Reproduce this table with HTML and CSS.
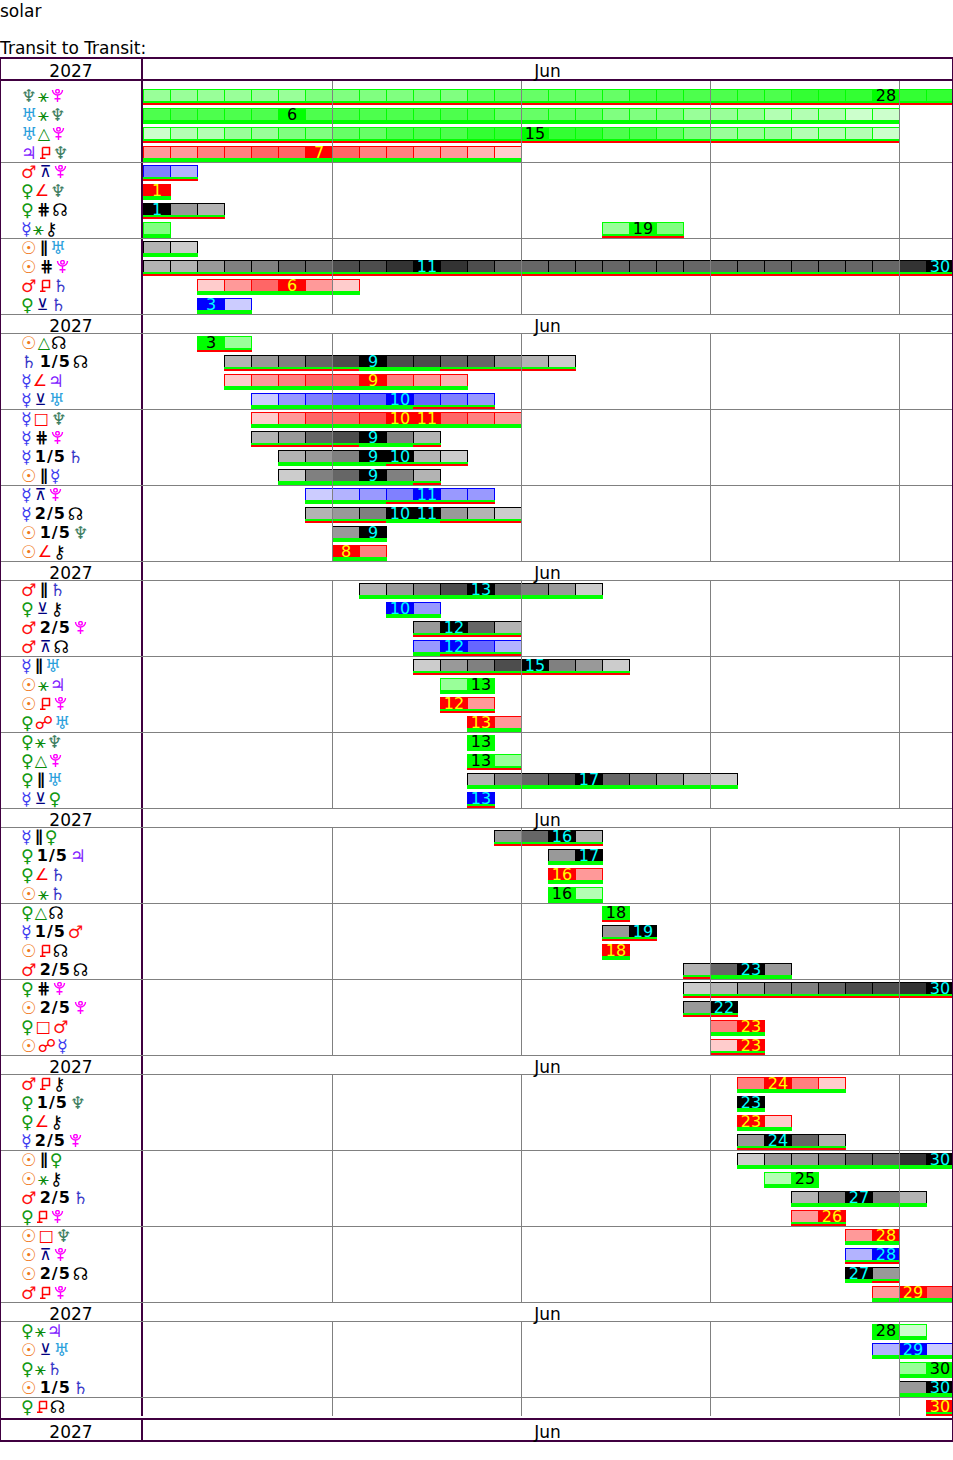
FILE: index.html
```html
<!DOCTYPE html>
<html>
<head>
<meta charset="utf-8">
<title>solar</title>
<link rel="stylesheet" href="styles.css">
</head>
<body>
<div class="site">solar</div>
<div class="heading">Transit to Transit:</div>
<div class="table">
  <div class="hdr"><div class="yr">2027</div><div class="mo">Jun</div></div>
  <div id="rows"></div>
  <div class="hdr"><div class="yr">2027</div><div class="mo">Jun</div></div>
</div>
<script src="script.js"></script>
</body>
</html>
```

FILE: styles.css
```css
html, body { margin: 0; padding: 0; background: #fff; }
body { font-family: "DejaVu Sans", Verdana, sans-serif; font-size: 17px; color: #000; width: 953px; }
.site { padding-top: 2px; line-height: 19px; height: 19px; }
.heading { margin-top: 18px; line-height: 18px; height: 18px; white-space: nowrap; }

.table { width: 953px; box-sizing: border-box; border-left: 1px solid #400040; border-right: 1px solid #400040; }

.hdr { display: grid; grid-template-columns: 142px 809px; height: 24px; box-sizing: border-box; border-top: 2px solid #400040; border-bottom: 2px solid #400040; }
.hdr > div { display: flex; align-items: flex-end; justify-content: center; line-height: 15px; }
.hdr .yr { border-right: 2px solid #400040; }

.sub { display: grid; grid-template-columns: 142px 809px; height: 19px; box-sizing: border-box; border-top: 1px solid #808080; }
.sub > div { display: flex; align-items: flex-end; justify-content: center; line-height: 14px; }
.sub .yr { border-right: 2px solid #400040; }

.grp { border-top: 1px solid #808080; }
.grp.first { border-top: 0; }
.row { display: grid; grid-template-columns: 142px 809px; height: 19px; box-sizing: border-box; }
.grp .row:first-child { height: 18px; }
.grp.first .row:first-child { height: 24px; }
.grp.last .row:last-child { height: 20px; padding-bottom: 2px; }

.sym { border-right: 2px solid #400040; padding-left: 20px; display: flex; align-items: flex-end; font-size: 16px; line-height: 18px; white-space: nowrap; }
.gl { margin-right: 1px; }
.gl.pl-big { font-size: 17.5px; }
.gl.as-big { font-size: 18px; }
.ico { display: inline-block; vertical-align: -1px; }
.p-su { color: #f07820; }
.p-me { color: #3c3cf0; }
.p-ve { color: #119911; }
.p-ma { color: #ff1010; }
.p-ju { color: #8020ff; }
.p-sa { color: #3838c8; }
.p-ur { color: #2aa0dc; }
.p-ne { color: #3d7d60; }
.p-pl { color: #ff00ff; margin-left: 1px; margin-right: 2px; }
.p-no, .p-ch { color: #000; }
.a-grn { color: #0a8a0a; }
.a-red { color: #ff0000; }
.a-nav { color: #000080; margin-left: 2px; margin-right: 2px; }
.a-blk { color: #000; font-weight: bold; margin-left: 2px; margin-right: 2px; }
.a-txt { color: #000; font-weight: bold; letter-spacing: 1px; margin-left: 2px; margin-right: 2px; }
.a-sq { margin-left: 1px; margin-right: 2px; }

.trk { position: relative; display: grid; grid-template-columns: repeat(30, 27px); align-items: end; overflow: hidden; }
.trk::after {
  content: ""; position: absolute; left: 0; top: 0; right: 0; bottom: 0; pointer-events: none;
  background-image: linear-gradient(#808080, #808080), linear-gradient(#808080, #808080), linear-gradient(#808080, #808080), linear-gradient(#808080, #808080);
  background-size: 1px 100%; background-repeat: no-repeat;
  background-position: 189px 0, 378px 0, 567px 0, 756px 0;
}
.bar { grid-row: 1; display: flex; justify-self: start; }
.cl { width: 27px; flex: none; }
.cl:last-child { width: 28px; }
.f { height: 12px; box-sizing: border-box; border-top: 1px solid; border-left: 1px solid; font-size: 16px; line-height: 11px; text-align: center; white-space: nowrap; }
.cl:last-child .f { border-right: 1px solid; }
.bar.G .f { border-color: #00ff00; color: #000; }
.bar.R .f { border-color: #ff0000; color: #ffff00; }
.bar.B .f { border-color: #0000ff; color: #00ffff; }
.bar.K .f { border-color: #000000; color: #00ffff; }
.s { height: 4px; }
.s.g { background: #00ff00; }
.s.r { background: linear-gradient(#00ff00 0 2px, #ff0000 2px 4px); }
```

FILE: script.js
```js
(function () {
  var PLUTO = '<svg class="ico" width="13" height="13" viewBox="0 0 13 13"><g fill="none" stroke="currentColor" stroke-width="1.4"><path d="M1.5 1a5 5 0 0 0 10 0"/><circle cx="6.5" cy="2.3" r="1.8"/><path d="M6.5 6V13M3.5 9.8H9.5"/></g></svg>';
  var SESQ = '<svg class="ico" width="12" height="13" viewBox="0 0 12 13"><g fill="none" stroke="currentColor" stroke-width="1.5"><path d="M3.5 1.5H10.5V8.5H3.5M3.5 1.5V12.3M1 12.3H6.5"/></g></svg>';
  var PL = { su: ['\u2609', 'su', 1], me: ['\u263F', 'me', 1], ve: ['\u2640', 've', 1], ma: ['\u2642', 'ma', 1], ju: ['\u2643', 'ju', 1], sa: ['\u2644', 'sa', 1], ur: ['\u2645', 'ur', 1], ne: ['\u2646', 'ne', 1], pl: [PLUTO, 'pl', 2], no: ['\u260A', 'no', 1], ch: ['\u26B7', 'ch', 1] };
  var AS = { sx: ['\u26B9', 'grn', 1], tr: ['\u25B3', 'grn', 0], sq: ['\u25A1', 'red sq', 0], sesq: [SESQ, 'red sq', 2], semi: ['\u2220', 'red', 0], op: ['\u260D', 'red', 1], qx: ['\u22BC', 'nav', 0], ssx: ['\u22BB', 'nav', 0], par: ['\u2225', 'blk', 0], cpar: ['\u22D5', 'blk', 0], q1: ['1/5', 'txt', 0], q2: ['2/5', 'txt', 0] };
  var BASE = { G: [0, 255, 0], R: [255, 0, 0], B: [0, 0, 255], K: [0, 0, 0] };
  function shade(t, d) {
    var b = BASE[t], k = d / 10;
    return 'rgb(' + b.map(function (v) { return Math.round(v + (255 - v) * k); }).join(',') + ')';
  }
  function el(tag, cls, txt) {
    var e = document.createElement(tag);
    if (cls) e.className = cls;
    if (txt != null) e.textContent = txt;
    return e;
  }
  function glyph(def, prefix, bigCls) {
    var cls = 'gl ' + def[1].split(' ').map(function (c) { return prefix + c; }).join(' ');
    if (def[2] === 2) {
      var s = el('span', cls);
      s.innerHTML = def[0];
      return s;
    }
    if (def[2] === 1) cls += ' ' + bigCls;
    return el('span', cls, def[0]);
  }
  function rep(c, n) { return new Array(n + 1).join(c); }

  var D = [
    [
      ['ne', 'sx', 'pl', [['G', 1, '666666' + '555555' + '444444' + '333333' + '222' + '0' + '22', 'r']]],
      ['ur', 'sx', 'ne', [['G', 1, '33333' + '0' + '333333344445556' + '6677788', 'g']]],
      ['ur', 'tr', 'pl', [['G', 1, '87766554433322' + '0' + '223345' + '6667778', 'r']]],
      ['ju', 'sesq', 'ne', [['R', 1, '665544' + '0' + '4556678', 'g']]]
    ],
    [
      ['ma', 'qx', 'pl', [['B', 1, '57', 'r']]],
      ['ve', 'semi', 'ne', [['R', 1, '0', 'g']]],
      ['ve', 'cpar', 'no', [['K', 1, '067', 'r']]],
      ['me', 'sx', 'ch', [['G', 1, '5', 'g'], ['G', 18, '605', 'r']]]
    ],
    [
      ['su', 'par', 'ur', [['K', 1, '78', 'g']]],
      ['su', 'cpar', 'pl', [['K', 1, '7765544332' + '0' + '23' + rep('4', 15) + '20', 'r']]],
      ['ma', 'sesq', 'sa', [['R', 3, '864068', 'g']]],
      ['ve', 'ssx', 'sa', [['B', 3, '08', 'g']]]
    ],
    'H',
    [
      ['su', 'tr', 'no', [['G', 3, '06', 'r']]],
      ['sa', 'q1', 'no', [['K', 4, '7654303344678', 'rrrrrgggrrrrr']]],
      ['me', 'semi', 'ju', [['R', 4, '865440567', 'g']]],
      ['me', 'ssx', 'ur', [['B', 5, '865440456', 'ggggggrrr']]]
    ],
    [
      ['me', 'sq', 'ne', [['R', 5, '8644300456', 'g']]],
      ['me', 'cpar', 'pl', [['K', 5, '7643057', 'rrrrggr']]],
      ['me', 'q1', 'sa', [['K', 6, '7650078', 'ggggrrr']]],
      ['su', 'par', 'me', [['K', 6, '854057', 'gggggr']]]
    ],
    [
      ['me', 'qx', 'pl', [['B', 7, '8765066', 'gggrrrr']]],
      ['me', 'q2', 'no', [['K', 7, '76500678', 'rrrggrrr']]],
      ['su', 'q1', 'ne', [['K', 8, '60', 'g']]],
      ['su', 'semi', 'ch', [['R', 8, '05', 'g']]]
    ],
    'H',
    [
      ['ma', 'par', 'sa', [['K', 9, '765304568', 'g']]],
      ['ve', 'ssx', 'ch', [['B', 10, '06', 'g']]],
      ['ma', 'q2', 'pl', [['K', 11, '6047', 'r']]],
      ['ma', 'qx', 'no', [['B', 11, '6047', 'grrr']]]
    ],
    [
      ['me', 'par', 'ur', [['K', 11, '86530568', 'r']]],
      ['su', 'sx', 'ju', [['G', 12, '60', 'g']]],
      ['su', 'sesq', 'pl', [['R', 12, '06', 'r']]],
      ['ve', 'op', 'ur', [['R', 13, '06', 'g']]]
    ],
    [
      ['ve', 'sx', 'ne', [['G', 13, '0', 'g']]],
      ['ve', 'tr', 'pl', [['G', 13, '06', 'r']]],
      ['ve', 'par', 'ur', [['K', 13, '7543045678', 'g']]],
      ['me', 'ssx', 've', [['B', 13, '0', 'r']]]
    ],
    'H',
    [
      ['me', 'par', 've', [['K', 14, '6407', 'r']]],
      ['ve', 'q1', 'ju', [['K', 16, '60', 'g']]],
      ['ve', 'semi', 'sa', [['R', 16, '06', 'g']]],
      ['su', 'sx', 'sa', [['G', 16, '07', 'g']]]
    ],
    [
      ['ve', 'tr', 'no', [['G', 18, '0', 'r']]],
      ['me', 'q1', 'ma', [['K', 18, '60', 'r']]],
      ['su', 'sesq', 'no', [['R', 18, '0', 'g']]],
      ['ma', 'q2', 'no', [['K', 21, '7406', 'rggg']]]
    ],
    [
      ['ve', 'cpar', 'pl', [['K', 21, '8765543320', 'r']]],
      ['su', 'q2', 'pl', [['K', 21, '60', 'r']]],
      ['ve', 'sq', 'ma', [['R', 22, '50', 'g']]],
      ['su', 'op', 'me', [['R', 22, '80', 'r']]]
    ],
    'H',
    [
      ['ma', 'sesq', 'ch', [['R', 23, '5058', 'g']]],
      ['ve', 'q1', 'ne', [['K', 23, '0', 'g']]],
      ['ve', 'semi', 'ch', [['R', 23, '08', 'g']]],
      ['me', 'q2', 'pl', [['K', 23, '6047', 'r']]]
    ],
    [
      ['su', 'par', 've', [['K', 23, '86654420', 'g']]],
      ['su', 'sx', 'ch', [['G', 24, '70', 'g']]],
      ['ma', 'q2', 'sa', [['K', 25, '75057', 'g']]],
      ['ve', 'sesq', 'pl', [['R', 25, '60', 'r']]]
    ],
    [
      ['su', 'sq', 'ne', [['R', 27, '60', 'g']]],
      ['su', 'qx', 'pl', [['B', 27, '70', 'r']]],
      ['su', 'q2', 'no', [['K', 27, '06', 'gr']]],
      ['ma', 'sesq', 'pl', [['R', 28, '604', 'g']]]
    ],
    'H',
    [
      ['ve', 'sx', 'ju', [['G', 28, '08', 'g']]],
      ['su', 'ssx', 'ur', [['B', 28, '708', 'g']]],
      ['ve', 'sx', 'sa', [['G', 29, '60', 'g']]],
      ['su', 'q1', 'sa', [['K', 29, '60', 'g']]]
    ],
    [
      ['ve', 'sesq', 'no', [['R', 30, '0', 'r']]]
    ]
  ];

  var root = document.getElementById('rows');
  D.forEach(function (g, gi) {
    if (g === 'H') {
      var s = el('div', 'sub');
      s.appendChild(el('div', 'yr', '2027'));
      s.appendChild(el('div', 'mo', 'Jun'));
      root.appendChild(s);
      return;
    }
    var cls = 'grp';
    if (gi === 0) cls += ' first';
    if (gi === D.length - 1) cls += ' last';
    var grp = el('div', cls);
    g.forEach(function (r) {
      var row = el('div', 'row');
      var sym = el('div', 'sym');
      sym.appendChild(glyph(PL[r[0]], 'p-', 'pl-big'));
      sym.appendChild(glyph(AS[r[1]], 'a-', 'as-big'));
      sym.appendChild(glyph(PL[r[2]], 'p-', 'pl-big'));
      var trk = el('div', 'trk');
      r[3].forEach(function (bar) {
        var t = bar[0], st = bar[1], sh = bar[2], sp = bar[3];
        var be = el('div', 'bar ' + t);
        be.style.gridColumn = st + ' / span ' + sh.length;
        for (var i = 0; i < sh.length; i++) {
          var d = +sh.charAt(i);
          var cl = el('div', 'cl');
          var f = el('div', 'f', d === 0 ? String(st + i) : null);
          f.style.backgroundColor = shade(t, d);
          var s2 = el('div', 's ' + sp.charAt(Math.min(i, sp.length - 1)));
          cl.appendChild(f);
          cl.appendChild(s2);
          be.appendChild(cl);
        }
        trk.appendChild(be);
      });
      row.appendChild(sym);
      row.appendChild(trk);
      grp.appendChild(row);
    });
    root.appendChild(grp);
  });
})();
```
